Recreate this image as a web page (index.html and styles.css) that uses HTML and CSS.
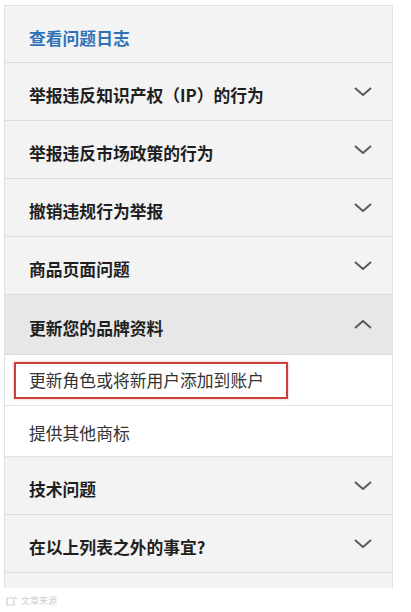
FILE: index.html
```html
<!DOCTYPE html>
<html lang="zh-CN">
<head>
<meta charset="utf-8">
<link rel="stylesheet" href="styles.css">
</head>
<body>
<div class="panel">
  <div class="row first"><span class="link">查看问题日志</span></div>
  <div class="row"><span class="title">举报违反知识产权（IP）的行为</span><svg class="chev" viewBox="0 0 18 9"><path d="M1 1 L9 8 L17 1"/></svg></div>
  <div class="row"><span class="title">举报违反市场政策的行为</span><svg class="chev" viewBox="0 0 18 9"><path d="M1 1 L9 8 L17 1"/></svg></div>
  <div class="row"><span class="title">撤销违规行为举报</span><svg class="chev" viewBox="0 0 18 9"><path d="M1 1 L9 8 L17 1"/></svg></div>
  <div class="row"><span class="title">商品页面问题</span><svg class="chev" viewBox="0 0 18 9"><path d="M1 1 L9 8 L17 1"/></svg></div>
  <div class="row open"><span class="title">更新您的品牌资料</span><svg class="chev" viewBox="0 0 18 9"><path d="M1 8 L9 1 L17 8"/></svg></div>
  <div class="sub marked"><span class="mark">更新角色或将新用户添加到账户</span></div>
  <div class="sub"><span class="subtext">提供其他商标</span></div>
  <div class="row"><span class="title">技术问题</span><svg class="chev" viewBox="0 0 18 9"><path d="M1 1 L9 8 L17 1"/></svg></div>
  <div class="row"><span class="title">在以上列表之外的事宜?</span><svg class="chev" viewBox="0 0 18 9"><path d="M1 1 L9 8 L17 1"/></svg></div>
  <div class="cut"></div>
</div>
<div class="wm"><svg class="wm-icon" viewBox="0 0 12 10"><path d="M1 2 H8 V9 H1 Z M9 1 L11 3"/></svg><span>文章来源</span></div>
</body>
</html>
```
FILE: styles.css
```css
html, body {
  margin: 0;
  padding: 0;
  background: #ffffff;
  font-family: "Noto Sans CJK SC", "Noto Sans", sans-serif;
}
.panel {
  margin: 5px 0 0 4px;
  width: 389px;
  box-sizing: border-box;
  border: 1px solid #e2e2e2;
  border-bottom: none;
  background: #f3f3f4;
}
.row {
  height: 58px;
  box-sizing: border-box;
  border-bottom: 1px solid #dcdcdc;
  display: flex;
  align-items: center;
  justify-content: space-between;
  padding: 0 20px 0 24px;
  background: #f3f3f4;
}
.row.first {
  height: 57px;
  padding-top: 8px;
}
.row.open {
  height: 60px;
  background: #e7e7e8;
}
.title {
  font-size: 16.8px;
  font-weight: bold;
  color: #1f1f1f;
  padding-top: 6px;
}
.link {
  font-size: 16.8px;
  font-weight: bold;
  color: #2f72b8;
}
.chev {
  width: 18px;
  height: 9px;
  fill: none;
  stroke: #5a5a5a;
  stroke-width: 2;
}
.sub {
  height: 51px;
  box-sizing: border-box;
  border-bottom: 1px solid #e2e2e2;
  background: #ffffff;
  display: flex;
  align-items: center;
  padding: 0 0 0 24px;
}
.sub.marked {
  padding-left: 9px;
}
.mark {
  border: 2px solid #c8413f;
  box-shadow: 0 0 2px rgba(200, 65, 63, 0.5);
  height: 37px;
  width: 274px;
  box-sizing: border-box;
  padding: 0 0 0 13px;
  display: flex;
  align-items: center;
  font-size: 16.8px;
  color: #333333;
}
.subtext {
  font-size: 16.8px;
  color: #333333;
  padding-top: 3px;
}
.cut {
  height: 15px;
  background: #f3f3f4;
}
.wm {
  margin: 7px 0 0 6px;
  display: flex;
  align-items: center;
  gap: 3px;
  color: #cfcfcf;
  font-size: 9px;
  line-height: 11px;
}
.wm-icon {
  width: 12px;
  height: 10px;
  fill: none;
  stroke: #cfcfcf;
  stroke-width: 1.2;
}
```
